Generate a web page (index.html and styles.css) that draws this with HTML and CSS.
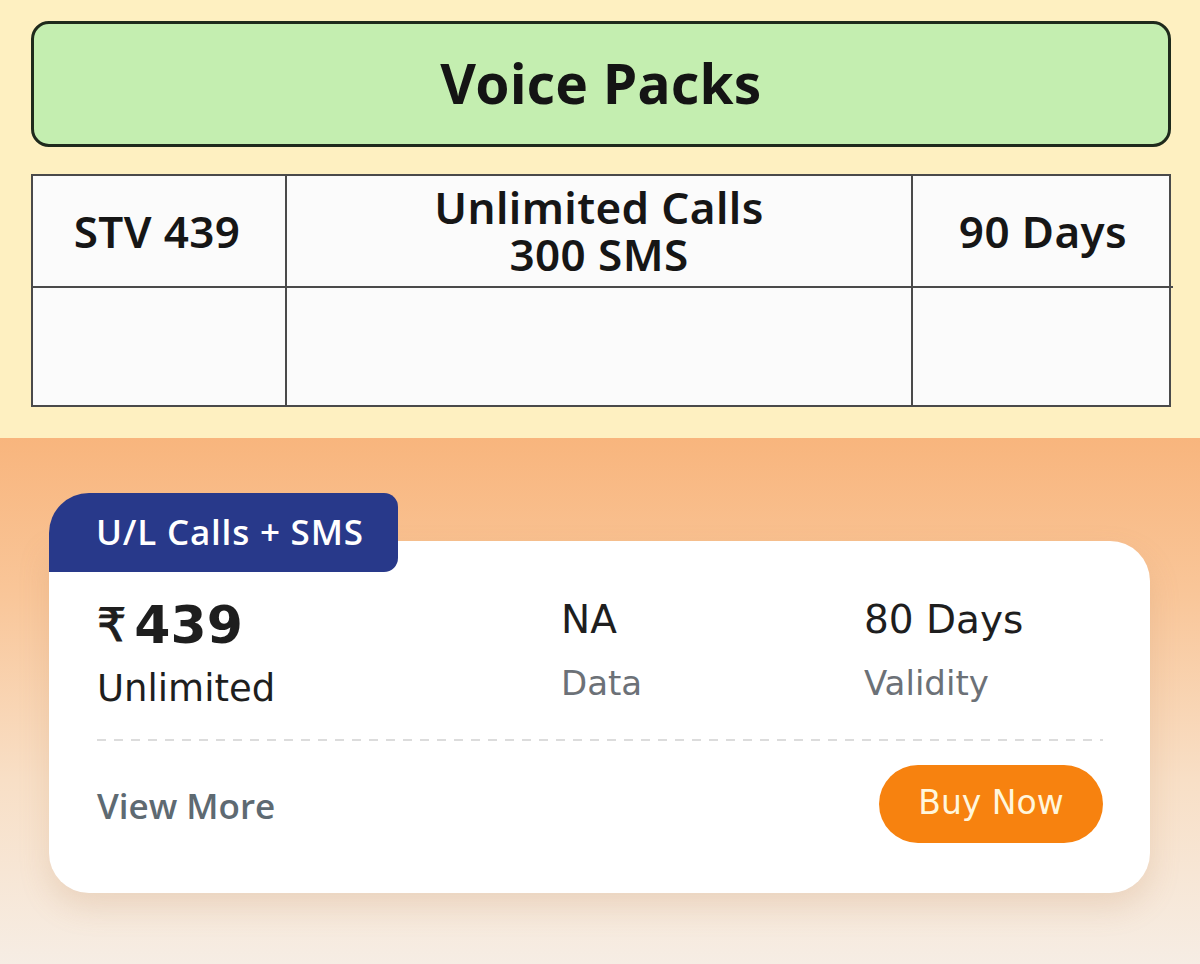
FILE: index.html
```html
<!DOCTYPE html>
<html lang="en">
<head>
<meta charset="utf-8">
<title>Voice Packs</title>
<link rel="stylesheet" href="styles.css">
</head>
<body>
<section class="top">
  <h1 class="title-box">Voice Packs</h1>
  <div class="plan-table">
    <div class="cell c1">STV 439</div>
    <div class="cell c2"><span class="ln">Unlimited Calls</span><span class="ln">300 SMS</span></div>
    <div class="cell c3">90 Days</div>
    <div class="cell c1 empty"></div>
    <div class="cell c2 empty"></div>
    <div class="cell c3 empty"></div>
  </div>
</section>
<section class="bottom">
  <div class="card">
    <div class="badge">U/L Calls + SMS</div>
    <div class="stats">
      <div class="stat">
        <div class="price"><span class="rupee">₹</span>439</div>
        <div class="sub dark">Unlimited</div>
      </div>
      <div class="stat">
        <div class="value">NA</div>
        <div class="sub">Data</div>
      </div>
      <div class="stat">
        <div class="value">80 Days</div>
        <div class="sub">Validity</div>
      </div>
    </div>
    <div class="divider"></div>
    <div class="actions">
      <span class="view-more">View More</span>
      <span class="buy">Buy Now</span>
    </div>
  </div>
</section>
</body>
</html>
```
FILE: styles.css
```css
* { box-sizing: border-box; }
html, body { margin: 0; padding: 0; }
body {
  width: 1200px;
  height: 964px;
  overflow: hidden;
  font-family: "Noto Sans", "DejaVu Sans", sans-serif;
}
.top {
  height: 438px;
  background: #fef0c1;
  padding: 21px 29px 0 31px;
}
.title-box {
  margin: 0;
  height: 126px;
  border: 3px solid #1f2a1c;
  border-radius: 18px;
  background: #c4eeb0;
  display: flex;
  align-items: center;
  justify-content: center;
  padding-bottom: 4px;
  font-size: 55px;
  font-weight: 700;
  color: #141414;
  letter-spacing: 0.3px;
}
.plan-table {
  margin-top: 27px;
  display: grid;
  grid-template-columns: 254px 626px 260px;
  grid-template-rows: 112px 117px;
  border: 2px solid #4a4a4a;
  background: #fbfbfb;
}
.cell {
  display: flex;
  flex-direction: column;
  align-items: center;
  justify-content: center;
  text-align: center;
  font-size: 44px;
  line-height: 47px;
  font-weight: 600;
  letter-spacing: 0.4px;
  color: #161616;
  border-right: 2px solid #4a4a4a;
  border-bottom: 2px solid #4a4a4a;
}
.cell .ln { display: block; line-height: 47px; }
.cell.c1 { padding-right: 4px; }
.cell.c3 { border-right: none; }
.cell.empty { border-bottom: none; }

.bottom {
  height: 526px;
  background: linear-gradient(180deg, #f8b57d 0%, #f9c699 30%, #f8dfc6 65%, #f6ede4 100%);
  padding: 103px 50px 0 49px;
}
.card {
  position: relative;
  width: 1101px;
  height: 352px;
  background: #ffffff;
  border-radius: 0 40px 40px 40px;
  box-shadow: 0 14px 30px rgba(190, 140, 100, 0.22);
  padding: 56px 47px 0 48px;
  font-family: "DejaVu Sans", "Noto Sans", sans-serif;
}
.badge {
  position: absolute;
  left: 0;
  top: -48px;
  width: 349px;
  height: 79px;
  background: #28398a;
  color: #ffffff;
  border-radius: 40px 14px 14px 0;
  font-family: "Open Sans", "Noto Sans", sans-serif;
  font-size: 35px;
  font-weight: 600;
  letter-spacing: 0.8px;
  padding-left: 47px;
  padding-bottom: 2px;
  display: flex;
  align-items: center;
}
.stats {
  display: grid;
  grid-template-columns: 464px 303px 1fr;
}
.price {
  font-size: 52px;
  font-weight: 700;
  line-height: 56px;
  color: #1e1e1e;
  display: flex;
  align-items: center;
}
.rupee {
  font-size: 46px;
  font-weight: 400;
  -webkit-text-stroke: 1px #1e1e1e;
  margin-right: 8px;
}
.value {
  font-size: 39px;
  line-height: 46px;
  color: #1e1e1e;
}
.sub {
  font-size: 34px;
  line-height: 42px;
  color: #6c7177;
  margin-top: 19px;
}
.sub.dark {
  color: #1e1e1e;
  font-size: 37px;
  line-height: 44px;
  margin-top: 14px;
}
.divider {
  margin-top: 28px;
  height: 2px;
  background-image: linear-gradient(90deg, #dcdcdc 0 9px, transparent 9px 100%);
  background-size: 17px 2px;
  background-repeat: repeat-x;
}
.actions {
  margin-top: 24px;
  display: flex;
  justify-content: space-between;
  align-items: center;
}
.view-more {
  font-family: "Open Sans", "Noto Sans", sans-serif;
  font-size: 35px;
  font-weight: 600;
  color: #5e6a72;
  padding-top: 2px;
}
.buy {
  width: 224px;
  height: 78px;
  border-radius: 39px;
  background: #f7820f;
  color: #fff6dc;
  font-size: 33px;
  display: flex;
  align-items: center;
  justify-content: center;
  padding-bottom: 3px;
}
```
